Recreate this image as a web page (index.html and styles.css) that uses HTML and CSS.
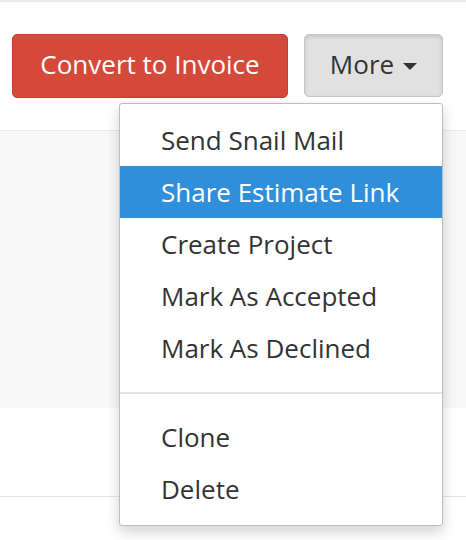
FILE: index.html
```html
<!DOCTYPE html>
<html>
<head>
<meta charset="utf-8">
<link rel="stylesheet" href="styles.css">
</head>
<body>
<div class="page">
  <div class="topline"></div>
  <div class="toolbar">
    <button class="btn btn-primary">Convert to Invoice</button>
    <button class="btn btn-more">More <span class="caret"></span></button>
  </div>
  <div class="panel"></div>
  <div class="white"></div>
  <div class="footer"></div>
  <ul class="menu">
    <li class="item">Send Snail Mail</li>
    <li class="item active">Share Estimate Link</li>
    <li class="item">Create Project</li>
    <li class="item">Mark As Accepted</li>
    <li class="item">Mark As Declined</li>
    <li class="divider"></li>
    <li class="item">Clone</li>
    <li class="item">Delete</li>
  </ul>
</div>
</body>
</html>
```
FILE: styles.css
```css
html, body {
  margin: 0;
  padding: 0;
  background: #fff;
}
.page {
  position: relative;
  width: 466px;
  height: 540px;
  overflow: hidden;
  font-family: "Open Sans", Lato, sans-serif;
}
.topline {
  height: 2px;
  background: #ededed;
}
.toolbar {
  display: flex;
  gap: 16px;
  padding: 32px 12px 32px 12px;
  height: 64px;
}
.btn {
  font-family: inherit;
  font-size: 26px;
  height: 64px;
  border-radius: 5px;
  padding: 0 0 4px;
  margin: 0;
  cursor: pointer;
}
.btn-primary {
  width: 276px;
  background: #d4493a;
  border: 1px solid #c43d2f;
  color: #fff;
}
.btn-more {
  width: 139px;
  height: 63px;
  background: #e1e1e1;
  border: 1px solid #c6c6c6;
  color: #333;
  box-shadow: inset 0 2px 4px rgba(0,0,0,0.12);
  display: flex;
  align-items: center;
  justify-content: center;
  gap: 9px;
}
.caret {
  width: 0;
  height: 0;
  border-left: 7px solid transparent;
  border-right: 7px solid transparent;
  border-top: 7px solid #333;
  margin-top: 6px;
}
.panel {
  height: 277px;
  border-top: 1px solid #e8e8e8;
  background: #f8f8f8;
}
.white {
  height: 88px;
  background: #fff;
}
.footer {
  border-top: 1px solid #e4e4e4;
  height: 60px;
  background: #fff;
}
.menu {
  position: absolute;
  left: 119px;
  top: 103px;
  width: 322px;
  margin: 0;
  padding: 10px 0;
  list-style: none;
  background: #fff;
  border: 1px solid #bdbdbd;
  border-radius: 3px;
  box-shadow: 0 6px 14px rgba(0,0,0,0.18);
}
.item {
  height: 52px;
  line-height: 52px;
  padding-left: 41px;
  font-size: 26px;
  color: #333;
}
.item.active {
  background: #2f8fdb;
  color: #fff;
}
.divider {
  height: 2px;
  background: #e4e4e4;
  margin: 18px 0 17px;
}
```
